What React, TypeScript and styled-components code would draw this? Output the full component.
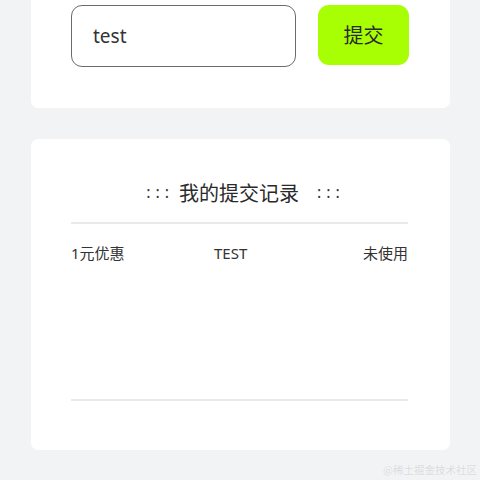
import React from "react";
import styled, { createGlobalStyle } from "styled-components";

const Global = createGlobalStyle`
  html, body { margin: 0; padding: 0; background: #f2f3f5; }
  body { width: 480px; height: 480px; overflow: hidden; font-family: "Noto Sans", "Noto Sans CJK SC", sans-serif; color: #333; }
  * { box-sizing: border-box; }
`;

const Page = styled.div`
  position: relative;
  width: 480px;
  height: 480px;
  background: #f2f3f5;
  padding: 0 30px 0 31px;
  display: flex;
  flex-direction: column;
  gap: 31px;
`;

const Card = styled.section<{ $top?: boolean }>`
  background: #ffffff;
  border-radius: ${(p) => (p.$top ? "0 0 7px 7px" : "7px")};
  padding: ${(p) => (p.$top ? "5px 40px 41px 40px" : "38px 42px 49px 40px")};
`;

const FormRow = styled.div`
  display: flex;
  align-items: flex-start;
  gap: 22px;
`;

const Input = styled.div`
  width: 225px;
  height: 62px;
  border: 1px solid #6b6b6b;
  border-radius: 11px;
  display: flex;
  align-items: center;
  padding-left: 21px;
  font-size: 19px;
  color: #333;
`;

const Button = styled.button`
  width: 91px;
  height: 60px;
  border: none;
  border-radius: 11px;
  background: #a8ff04;
  color: #2a2a2a;
  font-family: "Noto Sans CJK SC", sans-serif;
  font-size: 20px;
  padding: 0;
  padding-bottom: 2px;
`;

const Title = styled.div`
  display: flex;
  justify-content: center;
  align-items: center;
  gap: 13px;
  height: 30px;
  padding-left: 7px;
  font-family: "Noto Sans CJK SC", sans-serif;
  font-size: 20px;
  color: #2a2a2a;
`;

const Dots = styled.span<{ $side: "left" | "right" }>`
  font-family: "Noto Sans", sans-serif;
  font-size: 16px;
  letter-spacing: 5px;
  color: #333;
  margin-right: ${(p) => (p.$side === "left" ? "-8px" : "-5px")};
  margin-left: ${(p) => (p.$side === "right" ? "5px" : "0")};
`;

const Divider = styled.div`
  height: 2px;
  background: #e9e9eb;
`;

const List = styled.div`
  height: 175px;
  padding-top: 18px;
`;

const Row = styled.div`
  display: grid;
  grid-template-columns: 143px 1fr auto;
  align-items: center;
  height: 20px;
  font-family: "Noto Sans", "Noto Sans CJK SC", sans-serif;
  font-size: 15px;
  color: #333;
`;

const Watermark = styled.div`
  position: absolute;
  right: 3px;
  bottom: 3px;
  font-family: "Noto Sans CJK SC", sans-serif;
  font-size: 10.5px;
  color: #d8dadd;
  text-shadow: 0 0 1px #ffffff;
`;

export default function App() {
  return (
    <>
      <Global />
      <Page>
        <Card $top>
          <FormRow>
            <Input>test</Input>
            <Button>提交</Button>
          </FormRow>
        </Card>
        <Card>
          <Title>
            <Dots $side="left">:::</Dots>
            <span>我的提交记录</span>
            <Dots $side="right">:::</Dots>
          </Title>
          <div style={{ height: 15 }} />
          <Divider />
          <List>
            <Row>
              <span>1元优惠</span>
              <span>TEST</span>
              <span>未使用</span>
            </Row>
          </List>
          <Divider />
        </Card>
        <Watermark>@稀土掘金技术社区</Watermark>
      </Page>
    </>
  );
}
